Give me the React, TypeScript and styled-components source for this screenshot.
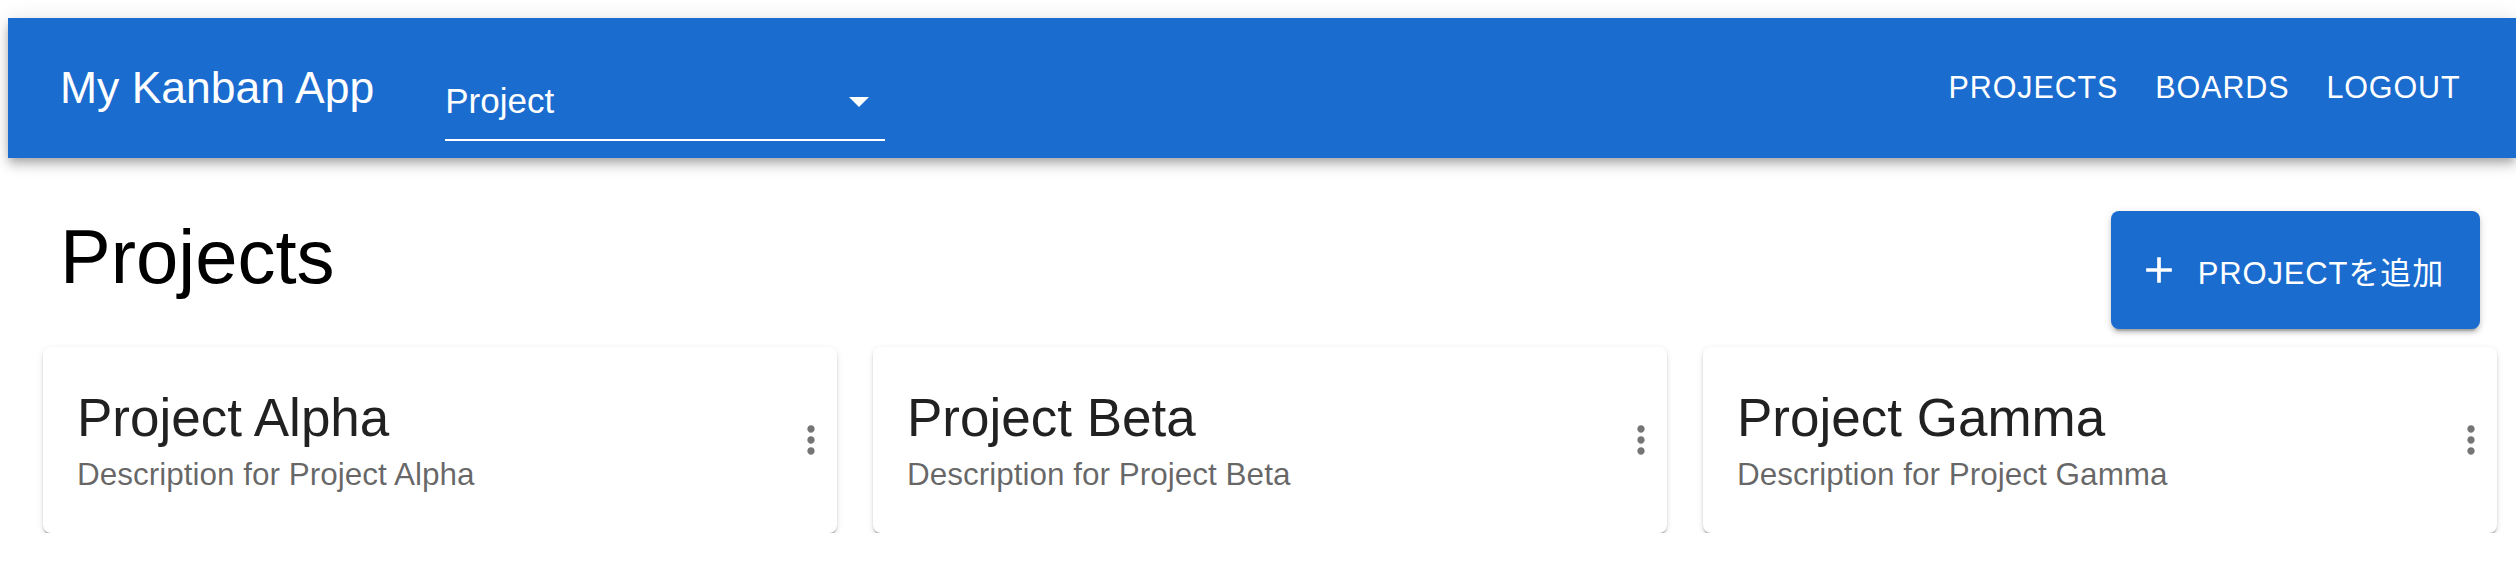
import React, { FC } from "react";
import styled, { createGlobalStyle } from "styled-components";

const GlobalStyle = createGlobalStyle`
  body {
    margin: 0;
    background: #ffffff;
    font-family: "Liberation Sans", "Noto Sans CJK JP", Arial, sans-serif;
    overflow: hidden;
  }
`;

const projects = [
  { id: 1, name: "Project Alpha", description: "Description for Project Alpha" },
  { id: 2, name: "Project Beta", description: "Description for Project Beta" },
  { id: 3, name: "Project Gamma", description: "Description for Project Gamma" },
];

const ArrowDropDown: FC = () => (
  <svg width="48" height="48" viewBox="0 0 24 24" fill="#ffffff">
    <path d="M7 10l5 5 5-5z" />
  </svg>
);

const AddIcon: FC = () => (
  <svg width="44" height="44" viewBox="0 0 24 24" fill="#ffffff">
    <path d="M19 13h-6v6h-2v-6H5v-2h6V5h2v6h6v2z" />
  </svg>
);

const MoreVertIcon: FC = () => (
  <svg width="44" height="44" viewBox="0 0 24 24" fill="#757575">
    <path d="M12 8c1.1 0 2-.9 2-2s-.9-2-2-2-2 .9-2 2 .9 2 2 2zm0 2c-1.1 0-2 .9-2 2s.9 2 2 2 2-.9 2-2-.9-2-2-2zm0 6c-1.1 0-2 .9-2 2s.9 2 2 2 2-.9 2-2-.9-2-2-2z" />
  </svg>
);

const App: FC = () => {
  return (
    <>
      <GlobalStyle />
      <AppBar>
        <Toolbar>
          <AppTitle>My Kanban App</AppTitle>
          <SelectBox>
            <SelectValue>Project</SelectValue>
            <ArrowDropDown />
          </SelectBox>
          <Spacer />
          <NavButton>Projects</NavButton>
          <NavButton>Boards</NavButton>
          <NavButton>Logout</NavButton>
        </Toolbar>
      </AppBar>
      <Main>
        <HeaderRow>
          <PageTitle>Projects</PageTitle>
          <AddButton>
            <AddIcon />
            <AddLabel>PROJECTを追加</AddLabel>
          </AddButton>
        </HeaderRow>
        <CardGrid>
          {projects.map((p) => (
            <Card key={p.id}>
              <CardBody>
                <CardTitle>{p.name}</CardTitle>
                <CardDesc>{p.description}</CardDesc>
              </CardBody>
              <MenuButton>
                <MoreVertIcon />
              </MenuButton>
            </Card>
          ))}
        </CardGrid>
      </Main>
    </>
  );
};

const AppBar = styled.header`
  margin: 18px 0 0 8px;
  background-color: #1b6ccf;
  color: #ffffff;
  box-shadow: 0 4px 8px -2px rgba(0, 0, 0, 0.2), 0 8px 10px 0 rgba(0, 0, 0, 0.14),
    0 2px 20px 0 rgba(0, 0, 0, 0.12);
  position: relative;
  z-index: 1;
`;

const Toolbar = styled.div`
  display: flex;
  align-items: center;
  height: 140px;
  padding: 0 37px 0 52px;
`;

const AppTitle = styled.div`
  font-size: 44.5px;
  line-height: 1.6;
  white-space: nowrap;
`;

const SelectBox = styled.div`
  align-self: flex-end;
  margin: 0 0 17px 71px;
  width: 440px;
  display: flex;
  align-items: center;
  padding: 0 2px 14.5px 0;
  border-bottom: 2px solid #ffffff;
  box-sizing: border-box;
`;

const SelectValue = styled.div`
  flex: 1;
  font-size: 35px;
  line-height: 40px;
`;

const Spacer = styled.div`
  flex: 1;
`;

const NavButton = styled.div`
  padding: 0 18.5px;
  font-size: 30.5px;
  letter-spacing: 0.88px;
  text-transform: uppercase;
  line-height: 1.75;
  white-space: nowrap;
`;

const Main = styled.main`
  padding: 53px 19px 0 43px;
`;

const HeaderRow = styled.div`
  display: flex;
  justify-content: space-between;
  align-items: flex-start;
  padding: 0 17px 0 17px;
`;

const PageTitle = styled.h1`
  margin: 0;
  font-size: 76px;
  font-weight: 400;
  line-height: 1.21;
  color: #000000;
`;

const AddButton = styled.div`
  display: flex;
  align-items: center;
  gap: 17px;
  height: 118px;
  box-sizing: border-box;
  padding: 0 36px 0 26px;
  border-radius: 8px;
  background-color: #1b6ccf;
  color: #ffffff;
  box-shadow: 0 6px 2px -4px rgba(0, 0, 0, 0.2), 0 4px 4px 0 rgba(0, 0, 0, 0.14),
    0 2px 10px 0 rgba(0, 0, 0, 0.12);
`;

const AddLabel = styled.span`
  font-size: 31px;
  letter-spacing: 0.86px;
  white-space: nowrap;
`;

const CardGrid = styled.div`
  margin-top: 18px;
  display: grid;
  grid-template-columns: repeat(3, 1fr);
  gap: 36px;
`;

const Card = styled.div`
  display: flex;
  align-items: center;
  padding: 36px 4px 36px 34px;
  border-radius: 8px;
  background: #ffffff;
  box-shadow: 0 4px 2px -2px rgba(0, 0, 0, 0.2), 0 2px 2px 0 rgba(0, 0, 0, 0.14),
    0 2px 6px 0 rgba(0, 0, 0, 0.12);
`;

const CardBody = styled.div`
  flex: 1;
`;

const CardTitle = styled.div`
  font-size: 53px;
  line-height: 1.31;
  color: rgba(0, 0, 0, 0.87);
`;

const CardDesc = styled.div`
  font-size: 31.5px;
  line-height: 1.41;
  color: rgba(0, 0, 0, 0.6);
`;

const MenuButton = styled.div`
  display: flex;
  width: 44px;
  height: 44px;
`;

export default App;
